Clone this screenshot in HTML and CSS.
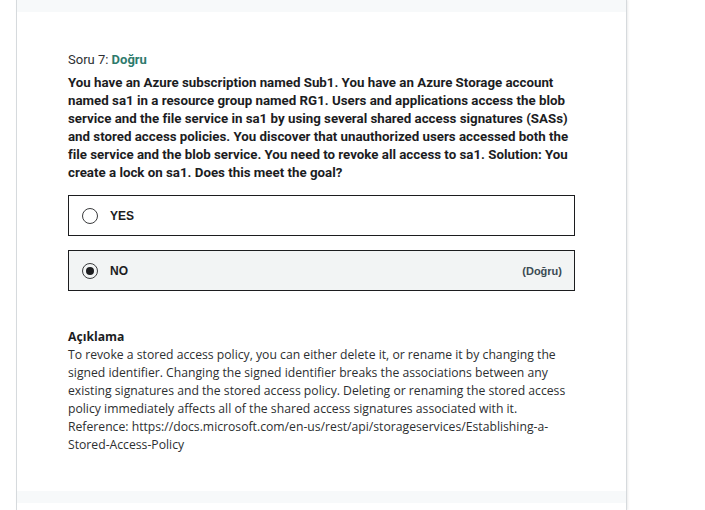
FILE: index.html
```html
<!DOCTYPE html>
<html lang="tr">
<head>
<meta charset="utf-8">
<link rel="stylesheet" href="styles.css">
</head>
<body>
<div class="card">
  <div class="band"></div>
  <div class="content">
    <div class="header">Soru 7: <span class="status">Doğru</span></div>
    <div class="question">You have an Azure subscription named Sub1. You have an Azure Storage account named sa1 in a resource group named RG1. Users and applications access the blob service and the file service in sa1 by using several shared access signatures (SASs) and stored access policies. You discover that unauthorized users accessed both the file service and the blob service. You need to revoke all access to sa1. Solution: You create a lock on sa1. Does this meet the goal?</div>
    <div class="options">
      <div class="option">
        <span class="radio"></span>
        <span class="label">YES</span>
      </div>
      <div class="option selected">
        <span class="radio checked"></span>
        <span class="label">NO</span>
        <span class="verdict">(Doğru)</span>
      </div>
    </div>
    <div class="explain">
      <div class="explain-title">Açıklama</div>
      <div class="explain-text">To revoke a stored access policy, you can either delete it, or rename it by changing the signed identifier. Changing the signed identifier breaks the associations between any existing signatures and the stored access policy. Deleting or renaming the stored access policy immediately affects all of the shared access signatures associated with it. Reference: https://docs.microsoft.com/en-us/rest/api/storageservices/Establishing-a-Stored-Access-Policy</div>
    </div>
  </div>
  <div class="band"></div>
</div>
</body>
</html>
```
FILE: styles.css
```css
html, body {
  margin: 0;
  padding: 0;
  background: #ffffff;
}
body {
  height: 510px;
  overflow: hidden;
}
.card {
  margin-left: 16px;
  width: 609px;
  border-left: 1px solid #d6dadd;
  border-right: 1px solid #d6dadd;
  box-shadow: 1px 0 2px rgba(0,0,0,0.08);
  background: #ffffff;
  min-height: 510px;
}
.band {
  height: 12px;
  background: #f7f9fa;
}
.content {
  padding: 39px 51px 37px 51px;
  color: #1c1d1f;
}
.header {
  font-family: Roboto, "Liberation Sans", sans-serif;
  font-size: 13px;
  line-height: 18px;
  color: #2d2f31;
}
.status {
  color: #2e7a6c;
  font-weight: 700;
}
.question {
  margin-top: 5px;
  font-family: Roboto, "Liberation Sans", sans-serif;
  font-weight: 700;
  font-size: 13.3px;
  line-height: 18px;
  color: #1c1d1f;
}
.options {
  margin-top: 13px;
  display: flex;
  flex-direction: column;
  gap: 14px;
}
.option {
  height: 39px;
  border: 1px solid #1c1d1f;
  display: flex;
  align-items: center;
  padding: 0 12px 0 13px;
  font-family: "Liberation Sans", Arial, sans-serif;
  font-weight: 700;
  font-size: 12px;
  color: #1c1d1f;
}
.option.selected {
  background: #f2f4f4;
}
.radio {
  width: 14px;
  height: 14px;
  border: 1px solid #3a3b3d;
  border-radius: 50%;
  box-sizing: content-box;
  margin-right: 12px;
  position: relative;
  flex: none;
}
.radio.checked::after {
  content: "";
  position: absolute;
  left: 3px;
  top: 3px;
  width: 8px;
  height: 8px;
  border-radius: 50%;
  background: #1c1d1f;
}
.label {
  flex: 1;
}
.verdict {
  color: #3b4a52;
  font-size: 11px;
}
.explain {
  margin-top: 37px;
  font-family: "Open Sans", sans-serif;
  font-size: 12.2px;
  line-height: 18px;
  color: #2d2f31;
}
.explain-title {
  font-weight: 700;
  color: #1c1d1f;
}
```
